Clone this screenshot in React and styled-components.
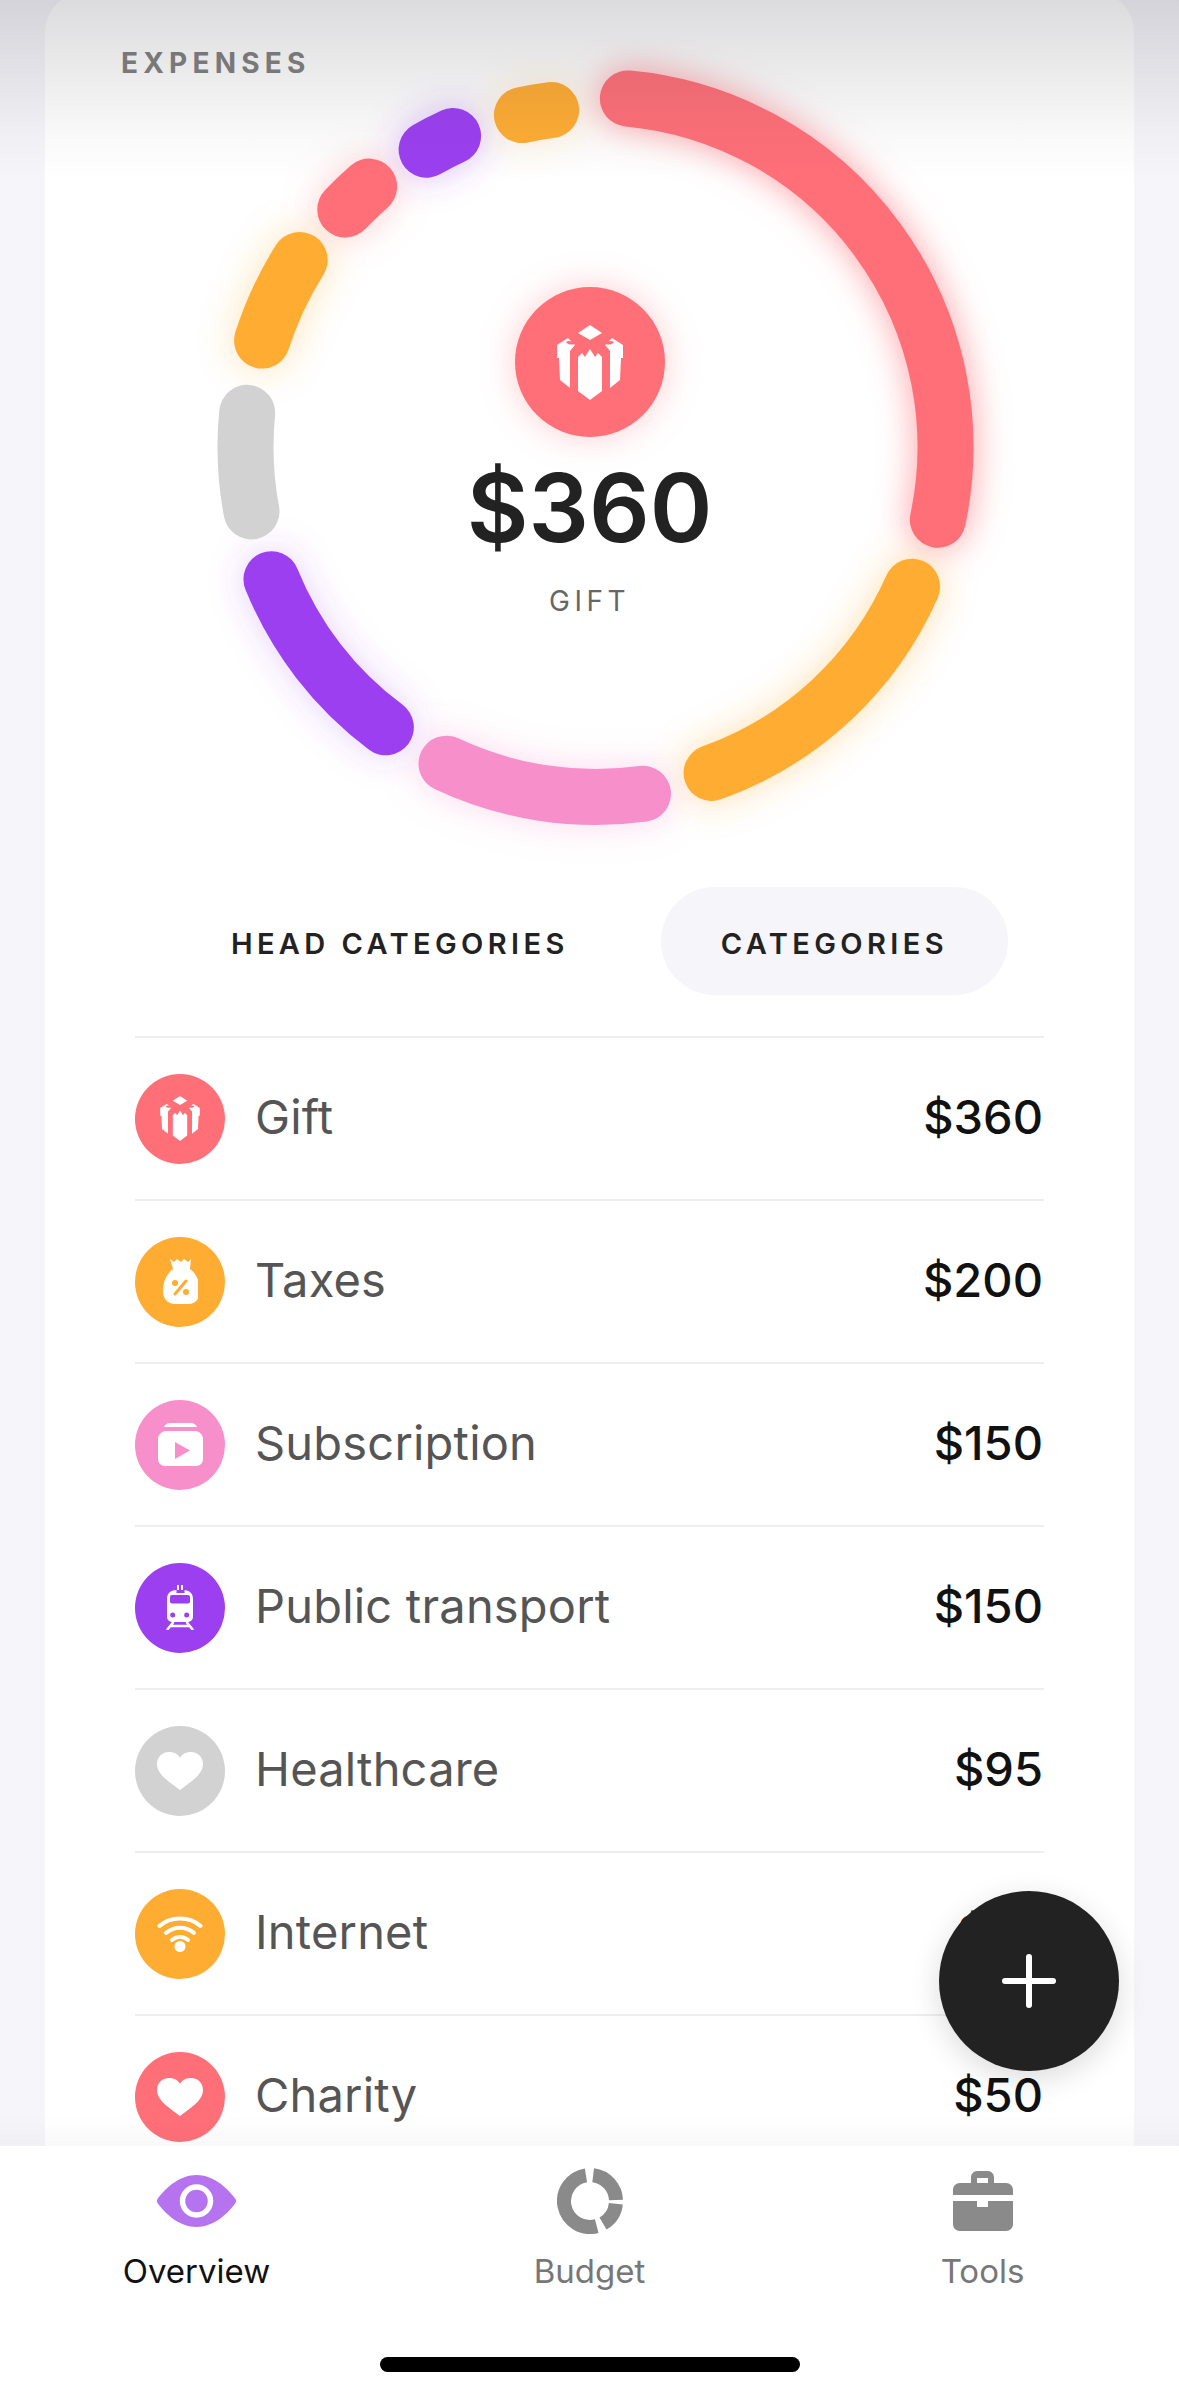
import React from 'react';
import styled, { createGlobalStyle } from 'styled-components';

const GlobalStyle = createGlobalStyle`
  html, body { margin: 0; padding: 0; background: #f5f5fa; }
  body { font-family: 'Inter', 'Open Sans', sans-serif; }
`;

const Screen = styled.div`
  position: relative;
  width: 1179px;
  height: 2396px;
  display: flex;
  flex-direction: column;
  overflow: hidden;
  background: #f5f5fa;
`;

const Scroll = styled.div`
  flex: 1;
  min-height: 0;
  overflow: hidden;
  padding: 0 45px;
`;

const Card = styled.div`
  background: #fff;
  border-radius: 40px 40px 0 0;
  margin-top: -8px;
  padding: 54px 90px 0;
`;

const TopFade = styled.div`
  position: absolute;
  top: 0;
  left: 0;
  right: 0;
  height: 180px;
  background: linear-gradient(to bottom, rgba(60, 60, 70, 0.18), rgba(60, 60, 70, 0.1) 40%, rgba(60, 60, 70, 0.03) 75%, rgba(60, 60, 70, 0));
  pointer-events: none;
`;

const BottomFade = styled.div`
  position: absolute;
  bottom: 250px;
  left: 0;
  right: 0;
  height: 30px;
  background: linear-gradient(to top, rgba(60, 60, 70, 0.03), rgba(60, 60, 70, 0));
  pointer-events: none;
`;

const Title = styled.div`
  font-weight: 700;
  font-size: 28px;
  line-height: 34px;
  letter-spacing: 5.2px;
  color: #808080;
  margin-left: -14px;
`;

const ChartBox = styled.div`
  position: relative;
  height: 767px;
  margin: -5px -90px 0;
`;

const RingSvg = styled.svg`
  display: block;
  width: 1089px;
  height: 767px;
  overflow: visible;
`;

const Center = styled.div`
  position: absolute;
  left: 0;
  right: 0;
  top: 212px;
  display: flex;
  flex-direction: column;
  align-items: center;
`;

const BigIcon = styled.div`
  width: 150px;
  height: 150px;
  border-radius: 50%;
  background: #ff6f78;
  box-shadow: 0 0 34px rgba(255, 111, 120, 0.35);
  display: flex;
  align-items: center;
  justify-content: center;
`;

const Amount = styled.div`
  font-weight: 600;
  font-size: 95px;
  line-height: 114px;
  color: #222;
  margin-top: 14px;
`;

const Caption = styled.div`
  font-size: 28px;
  line-height: 34px;
  letter-spacing: 4.5px;
  color: #666;
  margin-top: 19px;
`;

const Tabs = styled.div`
  display: flex;
  justify-content: flex-end;
  align-items: center;
  gap: 32px;
  margin: 45px 36px 0 0;
`;

const Tab = styled.div`
  height: 108px;
  box-sizing: border-box;
  padding: 4px 60px 0;
  border-radius: 54px;
  display: flex;
  align-items: center;
  font-weight: 600;
  font-size: 29px;
  letter-spacing: 4.4px;
  color: #222;
  background: ${(p) => (p.$active ? '#f5f5fa' : 'transparent')};
`;

const List = styled.div`
  margin-top: 41px;
  border-top: 2px solid #eeeeee;
`;

const Row = styled.div`
  height: 161px;
  display: flex;
  align-items: center;
  border-bottom: 2px solid #eeeeee;
`;

const Badge = styled.div`
  width: 90px;
  height: 90px;
  flex: none;
  border-radius: 50%;
  background: ${(p) => p.$color};
  display: flex;
  align-items: center;
  justify-content: center;
`;

const Name = styled.div`
  flex: 1;
  margin-left: 30px;
  font-size: 47px;
  letter-spacing: 0.2px;
  color: #555;
  padding-bottom: 4px;
`;

const Value = styled.div`
  font-weight: 500;
  font-size: 47px;
  color: #111;
  margin-right: 1px;
  padding-bottom: 4px;
`;

const Fab = styled.div`
  position: absolute;
  left: 939px;
  top: 1891px;
  width: 180px;
  height: 180px;
  border-radius: 50%;
  background: #222;
  box-shadow: 0 8px 30px rgba(0, 0, 0, 0.14);
  display: flex;
  align-items: center;
  justify-content: center;
`;

const TabBar = styled.div`
  height: 250px;
  flex: none;
  background: #fff;
  position: relative;
  display: grid;
  grid-template-columns: repeat(3, 1fr);
  align-content: start;
`;

const NavItem = styled.div`
  display: flex;
  flex-direction: column;
  align-items: center;
`;

const NavIcon = styled.div`
  height: 92px;
  margin-top: 9px;
  display: flex;
  align-items: center;
  justify-content: center;
`;

const NavLabel = styled.div`
  font-size: 33px;
  line-height: 38px;
  margin-top: 5px;
  color: ${(p) => (p.$active ? '#111' : '#777')};
`;

const HomeBar = styled.div`
  position: absolute;
  left: 380px;
  bottom: 24px;
  width: 420px;
  height: 15px;
  border-radius: 8px;
  background: #000;
`;

const RED = '#ff6f78';
const ORANGE = '#ffac33';
const PINK = '#f78fcb';
const PURPLE = '#9b3ff0';
const GRAY = '#d2d2d2';

// start / end angles are clockwise from 12 o'clock, small pieces sit a bit inside the main circle
const segments = [
  { from: 5.3, to: 102, r: 350, color: RED, glow: 0.6 },
  { from: 113.8, to: 160.4, r: 346, color: ORANGE, glow: 0.35 },
  { from: 172.2, to: 205.2, r: 350, color: PINK, glow: 0.3 },
  { from: 216.8, to: 247.8, r: 350, color: PURPLE, glow: 0.22 },
  { from: 259.4, to: 275.6, r: 350, color: GRAY, glow: 0 },
  { from: 287.7, to: 302.3, r: 350, color: ORANGE, glow: 0.3 },
  { from: 313.5, to: 319, r: 345, color: RED, glow: 0.3 },
  { from: 330.4, to: 335.4, r: 342, color: PURPLE, glow: 0.3 },
  { from: 347.5, to: 352.5, r: 340, color: ORANGE, glow: 0.2 },
];

const arcPath = (cx, cy, r, from, to) => {
  const pt = (deg) => {
    const a = (deg * Math.PI) / 180;
    return `${cx + r * Math.sin(a)} ${cy - r * Math.cos(a)}`;
  };
  return `M${pt(from)} A${r} ${r} 0 ${to - from > 180 ? 1 : 0} 1 ${pt(to)}`;
};

const ringArc = (s) => arcPath(550.5, 372, s.r, s.from, s.to);

const Ring = () => (
  <RingSvg viewBox="0 0 1089 767">
    <defs>
      <filter id="glow" filterUnits="userSpaceOnUse" x="-100" y="-100" width="1300" height="1000">
        <feGaussianBlur stdDeviation="17" />
      </filter>
    </defs>
    {segments.map((s) => (
      s.glow > 0 && (
        <path
          key={`g${s.from}`}
          d={ringArc(s)}
          fill="none"
          stroke={s.color}
          strokeOpacity={s.glow}
          strokeWidth="60"
          strokeLinecap="round"
          filter="url(#glow)"
        />
      )
    ))}
    {segments.map((s) => (
      <path
        key={s.from}
        d={ringArc(s)}
        fill="none"
        stroke={s.color}
        strokeWidth="56"
        strokeLinecap="round"
      />
    ))}
  </RingSvg>
);

const GiftIcon = ({ width, height, color }) => (
  <svg width={width} height={height} viewBox="0 0 66 75">
    <path fill="#fff" d="M33 0l12 8-12 7-12-7z" />
    <path fill="#fff" d="M0 20l11-7 7 7-5 6v37L3 55 2 33H0z" />
    <path fill="#fff" d="M66 20l-11-7-7 7 5 6v37l10-8 1-22h2z" />
    <path fill="#fff" d="M21 32l4-4 3 4 5-8 5 8 3-4 4 4v34l-12 9-12-9z" />
    <path fill={color} d="M9 17c3-2 7-1 9 2-3 1-7 1-9-2zM57 17c-3-2-7-1-9 2 3 1 7 1 9-2z" />
  </svg>
);

const BagIcon = ({ color }) => (
  <svg width="35" height="45" viewBox="0 0 35 45">
    <path fill="#fff" d="M7 0l4 3 3-3 4 3 3-3 4 3 3-3-1 10c7 5 10 14 10 22 0 8-5 13-12 13H12C5 45 0 40 0 32c0-8 3-17 10-22z" />
    <path fill="none" stroke={color} strokeWidth="3" strokeLinecap="round" d="M12 35l11-13" />
    <circle fill={color} cx="12" cy="24" r="3" />
    <circle fill={color} cx="23" cy="33" r="3" />
  </svg>
);

const BoxIcon = ({ color }) => (
  <svg width="45" height="43" viewBox="0 0 45 43">
    <path fill="#fff" d="M12 0h21c3 0 5 2 6 4H6c1-2 3-4 6-4z" />
    <path fill="#fff" d="M7 8c-4 1-7 4-7 8v20c0 4 3 7 7 7h31c4 0 7-3 7-7V16c0-4-3-7-7-8z" />
    <path fill={color} d="M17 19v17l15-8.500z" />
  </svg>
);

const TrainIcon = ({ color }) => (
  <svg width="28" height="45" viewBox="0 0 28 45">
    <path fill="#fff" d="M11 0h2v5h2V0h2v5c6 0 10 3 10 9v18c0 3-3 5-6 5H7c-3 0-6-2-6-5V14C1 8 5 5 11 5z" />
    <rect fill={color} x="10.500" y="5" width="8" height="3" />
    <rect fill={color} x="4" y="10" width="20" height="8.500" rx="2" />
    <circle fill={color} cx="6.700" cy="30" r="2.500" />
    <circle fill={color} cx="20.700" cy="30" r="2.500" />
    <path fill="none" stroke="#fff" strokeWidth="2.500" d="M7.500 37L1 45M20.500 37L27 45M4 41h20" />
  </svg>
);

const HeartIcon = () => (
  <svg width="46" height="38" viewBox="0 0 46 38">
    <path fill="#fff" d="M23 38C14 31 0 23 0 12 0 5 5 0 12 0c5 0 9 2 11 6 2-4 6-6 11-6 7 0 12 5 12 12 0 11-14 19-23 26z" />
  </svg>
);

const WifiIcon = () => (
  <svg width="46" height="36" viewBox="0 0 46 36">
    <g fill="none" stroke="#fff" strokeWidth="4" strokeLinecap="round">
      <path d="M2.500 10c11-10 30-10 41 0" />
      <path d="M9 17c8-7 20-7 28 0" />
      <path d="M15 24c5-4 11-4 16 0" />
    </g>
    <circle fill="#fff" cx="23" cy="30.500" r="5.500" />
  </svg>
);

const EyeIcon = () => (
  <svg width="81" height="52" viewBox="0 0 81 52">
    <path fill="#b573f0" d="M40.500 0C56 0 70 11 79.500 24q1.500 2 0 4C70 41 56 52 40.500 52S11 41 1.500 28q-1.500-2 0-4C11 11 25 0 40.500 0z" />
    <circle cx="40.500" cy="26" r="14" fill="none" stroke="#fff" strokeWidth="5.500" />
  </svg>
);

const BudgetIcon = () => (
  <svg width="66" height="66" viewBox="0 0 66 66">
    <g fill="none" stroke="#8a8a8a" strokeWidth="14">
      <path d={arcPath(33, 33, 26, 7, 88)} />
      <path d={arcPath(33, 33, 26, 96, 150)} />
      <path d={arcPath(33, 33, 26, 165, 351)} />
    </g>
  </svg>
);

const ToolsIcon = () => (
  <svg width="60" height="60" viewBox="0 0 60 60">
    <path
      fill="#8a8a8a"
      fillRule="evenodd"
      d="M18 12V6c0-3 3-6 6-6h11c3 0 6 3 6 6v6h12c4 0 7 3 7 7v5H0v-5c0-4 3-7 7-7zm6 0h11V7H24z"
    />
    <path fill="#8a8a8a" d="M0 30h24v6h11v-6h25v23c0 4-3 7-7 7H7c-4 0-7-3-7-7z" />
  </svg>
);

const PlusIcon = () => (
  <svg width="54" height="54" viewBox="0 0 54 54">
    <path stroke="#fff" strokeWidth="6" strokeLinecap="round" d="M27 3v48M3 27h48" />
  </svg>
);

const rows = [
  { name: 'Gift', value: '$360', color: RED, icon: <GiftIcon width={40} height={45} color={RED} /> },
  { name: 'Taxes', value: '$200', color: ORANGE, icon: <BagIcon color={ORANGE} /> },
  { name: 'Subscription', value: '$150', color: PINK, icon: <BoxIcon color={PINK} /> },
  { name: 'Public transport', value: '$150', color: PURPLE, icon: <TrainIcon color={PURPLE} /> },
  { name: 'Healthcare', value: '$95', color: GRAY, icon: <HeartIcon /> },
  { name: 'Internet', value: '$75', color: ORANGE, icon: <WifiIcon /> },
  { name: 'Charity', value: '$50', color: RED, icon: <HeartIcon /> },
];

const App = () => (
  <Screen>
    <GlobalStyle />
    <Scroll>
      <Card>
        <Title>EXPENSES</Title>
        <ChartBox>
          <Ring />
          <Center>
            <BigIcon>
              <GiftIcon width={66} height={75} color={RED} />
            </BigIcon>
            <Amount>$360</Amount>
            <Caption>GIFT</Caption>
          </Center>
        </ChartBox>
        <Tabs>
          <Tab>HEAD CATEGORIES</Tab>
          <Tab $active>CATEGORIES</Tab>
        </Tabs>
        <List>
          {rows.map((r) => (
            <Row key={r.name}>
              <Badge $color={r.color}>{r.icon}</Badge>
              <Name>{r.name}</Name>
              <Value>{r.value}</Value>
            </Row>
          ))}
        </List>
      </Card>
    </Scroll>
    <TopFade />
    <BottomFade />
    <TabBar>
      <NavItem>
        <NavIcon><EyeIcon /></NavIcon>
        <NavLabel $active>Overview</NavLabel>
      </NavItem>
      <NavItem>
        <NavIcon><BudgetIcon /></NavIcon>
        <NavLabel>Budget</NavLabel>
      </NavItem>
      <NavItem>
        <NavIcon><ToolsIcon /></NavIcon>
        <NavLabel>Tools</NavLabel>
      </NavItem>
      <HomeBar />
    </TabBar>
    <Fab><PlusIcon /></Fab>
  </Screen>
);

export default App;
